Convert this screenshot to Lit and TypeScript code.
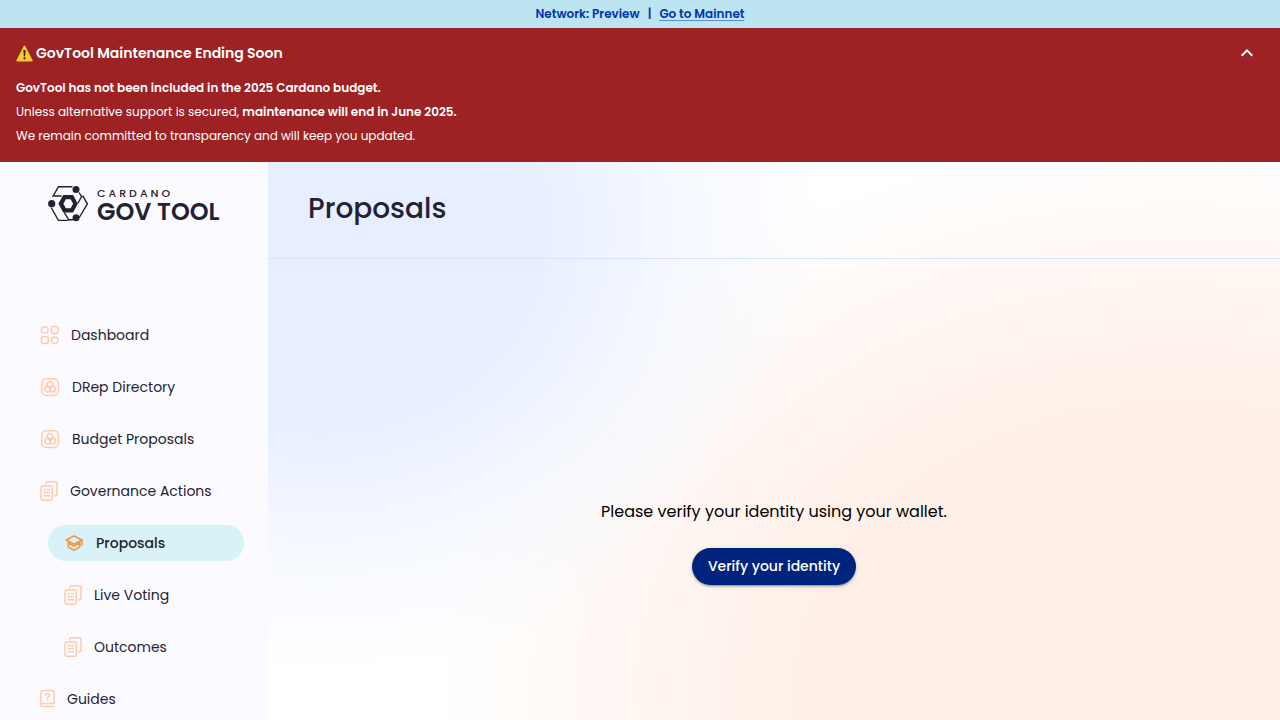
import { LitElement, html, css, svg, TemplateResult } from "lit";
import { customElement, property, state } from "lit/decorators.js";
import { classMap } from "lit/directives/class-map.js";

type IconName = "grid" | "drep" | "docs" | "cap" | "guide";

const ICONS: Record<IconName, { width: number; height: number; body: TemplateResult }> = {
  grid: {
    width: 19,
    height: 20,
    body: svg`
      <circle cx="4.75" cy="5" r="3.3"/>
      <rect x="11.3" y="1.6" width="6.8" height="6.8" rx="2.2"/>
      <rect x="1.4" y="11.8" width="6.8" height="6.8" rx="2.2"/>
      <circle cx="14.7" cy="15.2" r="3.3"/>`,
  },
  drep: {
    width: 20,
    height: 20,
    body: svg`
      <rect x="1.7" y="1.7" width="16.8" height="16.8" rx="4.8"/>
      <circle cx="10" cy="7.7" r="2.9"/>
      <circle cx="7.8" cy="12" r="2.9"/>
      <circle cx="12.5" cy="12" r="2.9"/>`,
  },
  docs: {
    width: 18,
    height: 20,
    body: svg`
      <rect x="1" y="5" width="11.4" height="14.2" rx="2"/>
      <path d="M5.7 3.1V2.8a2 2 0 0 1 2-2H15a2 2 0 0 1 2 2v10a2 2 0 0 1-2 2h-.8"/>
      <path d="M3.9 8.5h1.9M7.9 8.5h1.7M3.9 11.5h5.7M3.9 14.7h5.7"/>`,
  },
  cap: {
    width: 20,
    height: 20,
    body: svg`
      <path d="M2.2 7 10 2.8 17.9 7 10 11.2Z"/>
      <path d="M17.9 7v5.3"/>
      <path d="M4.2 9.8 10 13l5.8-3.2M4.2 9.8v4.1L10 17.4l5.8-3.5V9.8"/>`,
  },
  guide: {
    width: 15,
    height: 20,
    body: svg`
      <path d="M.9 15.6V3.6a2 2 0 0 1 2-2h9.3a2 2 0 0 1 2 2v11H2.3a1.4 1.4 0 0 0-1.4 1.4c0 1 .6 1.5 1.4 1.5h11.9"/>
      <path d="M5.6 6.2c0-2.4 4-2.3 4 0 0 1.5-2 1.5-2 3.2M7.6 11.4v.3"/>`,
  },
};

interface NavItem {
  label: string;
  icon: IconName;
  nested?: boolean;
  active?: boolean;
}

const NAV: NavItem[] = [
  { label: "Dashboard", icon: "grid" },
  { label: "DRep Directory", icon: "drep" },
  { label: "Budget Proposals", icon: "drep" },
  { label: "Governance Actions", icon: "docs" },
  { label: "Proposals", icon: "cap", nested: true, active: true },
  { label: "Live Voting", icon: "docs", nested: true },
  { label: "Outcomes", icon: "docs", nested: true },
  { label: "Guides", icon: "guide" },
];

@customElement("nav-icon")
export class NavIcon extends LitElement {
  @property() name: IconName = "grid";

  static styles = css`
    :host {
      display: block;
      flex: none;
    }
    .glyph {
      display: block;
      fill: none;
      stroke: currentColor;
      stroke-width: 1.5;
      stroke-linecap: round;
      stroke-linejoin: round;
    }
  `;

  render() {
    const icon = ICONS[this.name];
    return html`<svg class="glyph" width=${icon.width} height=${icon.height}
      viewBox="0 0 ${icon.width} ${icon.height}" aria-hidden="true">${icon.body}</svg>`;
  }
}

@customElement("gov-logo")
export class GovLogo extends LitElement {
  static styles = css`
    .logo {
      display: flex;
      align-items: flex-start;
      gap: 8px;
      color: #242232;
      text-decoration: none;
    }
    .mark {
      display: block;
      flex: none;
    }
    .words {
      display: flex;
      flex-direction: column;
    }
    .small {
      font-size: 11px;
      line-height: 14px;
      font-weight: 500;
      letter-spacing: 3px;
    }
    .large {
      font-size: 24px;
      line-height: 24px;
      font-weight: 600;
      white-space: nowrap;
    }
  `;

  render() {
    return html`<a class="logo" href="#">
      <svg class="mark" width="41" height="36" viewBox="0 0 41 36" aria-hidden="true">
        <g fill="none" stroke="#242232" stroke-width="1.4">
          <path d="M24.5.8H10.4L4.6 11M6 10h7.6"/>
          <path d="M31 6.5 33.6 10.6 29.8 17.5M34.6 9.6 39.4 17.8 31 32"/>
          <path d="M3.2 21.5 10.4 34.4h10.2M16.2 26.4l4.6 7.4H25"/>
        </g>
        <path fill="#242232" fill-rule="evenodd" d="M15.2 9h9.9l4.7 8.8-4.7 8.8h-9.9l-4.8-8.8ZM17.9 13.3 15.4 17.8l2.5 4.5h4.7l2.5-4.5-2.5-4.5Z"/>
        <g fill="#242232">
          <circle cx="28" cy="3.5" r="3.5"/>
          <circle cx="3.7" cy="17.7" r="3.6"/>
          <circle cx="28" cy="31.8" r="3.5"/>
        </g>
      </svg>
      <span class="words"><span class="small">CARDANO</span><span class="large">GOV TOOL</span></span>
    </a>`;
  }
}

@customElement("app-root")
export class AppRoot extends LitElement {
  @state() private expanded = true;

  static styles = css`
    :host {
      display: flex;
      flex-direction: column;
      min-height: 100vh;
      font-family: Poppins, Inter, sans-serif;
      font-size: 14px;
      line-height: 20px;
      color: #242232;
      background: #fbfbff;
    }
    .network {
      display: flex;
      justify-content: center;
      gap: 8px;
      padding: 4px 16px;
      background: #bce4f1;
      color: #0033ad;
      font-size: 12px;
      font-weight: 600;
    }
    .network-link {
      color: inherit;
      text-decoration-color: rgba(0, 51, 173, 0.5);
      text-underline-offset: 2px;
      text-decoration-thickness: 1px;
    }
    .banner {
      padding: 13px 16px 14px;
      background: #9c2224;
      color: #fff;
      font-size: 12px;
      line-height: 24px;
    }
    .banner-head {
      display: flex;
      align-items: center;
      justify-content: space-between;
      margin-bottom: 11px;
    }
    .banner-title {
      display: flex;
      align-items: center;
      gap: 3px;
      margin: 0;
      font-size: 14px;
      font-weight: 600;
    }
    .toggle {
      display: block;
      padding: 0 5px;
      border: 0;
      background: none;
      color: inherit;
      cursor: pointer;
    }
    .chevron {
      display: block;
      fill: currentColor;
    }
    .chevron.closed {
      transform: rotate(180deg);
    }
    .line {
      margin: 0;
    }
    .strong {
      font-weight: 600;
    }
    .layout {
      display: flex;
      flex: 1;
    }
    .sidebar {
      flex: none;
      box-sizing: border-box;
      width: 268px;
      padding: 24px 24px 0;
    }
    .brand {
      display: block;
      padding-left: 24px;
    }
    .menu {
      display: flex;
      flex-direction: column;
      gap: 16px;
      margin: 93px 0 0;
      padding: 0;
      list-style: none;
    }
    .item {
      display: flex;
      align-items: center;
      gap: 12px;
      padding: 8px 16px;
      border-radius: 18px;
      color: inherit;
      text-decoration: none;
      white-space: nowrap;
    }
    .nested {
      margin-left: 24px;
    }
    .icon {
      color: #ffcbad;
    }
    .active {
      background: #d8f2f7;
      font-weight: 500;
    }
    .active .icon {
      color: #f29339;
    }
    .main {
      flex: 1;
      min-width: 0;
      display: flex;
      flex-direction: column;
      background:
        radial-gradient(ellipse 50% 80% at 5% 12%, #e6eeff 0%, #e8efff 45%, rgba(240, 245, 255, 0.6) 72%, rgba(255, 255, 255, 0) 100%),
        radial-gradient(ellipse 74% 100% at 90% 94%, #feeee5 0%, #fef0e7 48%, #fff5f1 70%, rgba(255, 252, 250, 0.8) 90%, rgba(255, 255, 255, 0) 100%),
        #fff;
    }
    .head {
      padding: 26px 40px 28px;
      border-bottom: 1px solid #d6e2ff;
    }
    .title {
      margin: 0;
      font-size: 28px;
      line-height: 42px;
      font-weight: 500;
    }
    .verify {
      display: flex;
      flex-direction: column;
      align-items: center;
      gap: 24px;
      padding: 240px 24px 24px;
    }
    .prompt {
      margin: 0;
      color: #000;
      font-size: 16px;
      line-height: 25px;
      text-align: center;
    }
    .button {
      padding: 6px 16px;
      border: 0;
      border-radius: 20px;
      background: #00247d;
      color: #fff;
      font: inherit;
      font-weight: 500;
      line-height: 25px;
      cursor: pointer;
      box-shadow: 0 3px 1px -2px rgba(0, 0, 0, 0.2), 0 2px 2px rgba(0, 0, 0, 0.14), 0 1px 5px rgba(0, 0, 0, 0.12);
    }
  `;

  private toggle() {
    this.expanded = !this.expanded;
  }

  render() {
    return html`
      <div class="network">
        <span>Network: Preview</span><span>|</span><a class="network-link" href="#">Go to Mainnet</a>
      </div>
      <section class="banner">
        <div class="banner-head">
          <h2 class="banner-title">
            <svg width="17" height="17" viewBox="0 0 17 17" aria-hidden="true">
              <path d="M8.5 1.4 15.9 15.6H1.1Z" fill="#fcc934" stroke="#fcc934" stroke-width="1.6" stroke-linejoin="round"/>
              <path d="M7.3 5h2.4l-.6 6.5H7.9Z" fill="#35302c"/>
              <circle cx="8.5" cy="13.4" r="1.1" fill="#35302c"/>
            </svg>
            GovTool Maintenance Ending Soon
          </h2>
          <button class="toggle" aria-label="Toggle notice" aria-expanded=${this.expanded} @click=${this.toggle}>
            <svg class=${classMap({ chevron: true, closed: !this.expanded })} width="24" height="24" viewBox="0 0 24 24">
              <path d="m12 8-6 6 1.41 1.41L12 10.83l4.59 4.58L18 14z"/>
            </svg>
          </button>
        </div>
        ${this.expanded
          ? html`<p class="line strong">GovTool has not been included in the 2025 Cardano budget.</p>
              <p class="line">Unless alternative support is secured, <span class="strong">maintenance will end in June 2025.</span></p>
              <p class="line">We remain committed to transparency and will keep you updated.</p>`
          : ""}
      </section>
      <div class="layout">
        <nav class="sidebar">
          <gov-logo class="brand"></gov-logo>
          <ul class="menu">
            ${NAV.map(
              (item) => html`<li>
                <a href="#" class=${classMap({ item: true, nested: !!item.nested, active: !!item.active })}>
                  <nav-icon class="icon" .name=${item.icon}></nav-icon>${item.label}
                </a>
              </li>`
            )}
          </ul>
        </nav>
        <main class="main">
          <header class="head"><h1 class="title">Proposals</h1></header>
          <section class="verify">
            <p class="prompt">Please verify your identity using your wallet.</p>
            <button class="button">Verify your identity</button>
          </section>
        </main>
      </div>
    `;
  }
}
